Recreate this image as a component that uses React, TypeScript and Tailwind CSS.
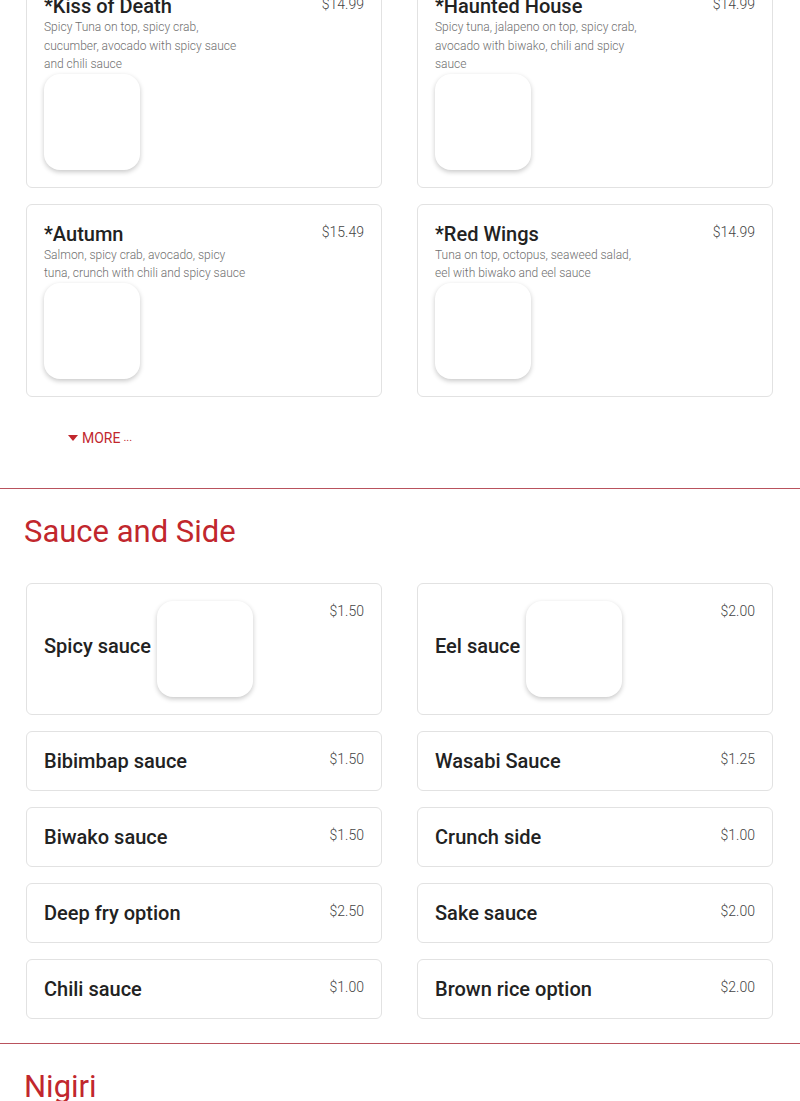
import React from 'react';

type Roll = { name: string; desc: string; price: string };
type Side = { name: string; price: string; image?: boolean };

const rolls: Roll[] = [
  { name: '*Kiss of Death', desc: 'Spicy Tuna on top, spicy crab, cucumber, avocado with spicy sauce and chili sauce', price: '$14.99' },
  { name: '*Haunted House', desc: 'Spicy tuna, jalapeno on top, spicy crab, avocado with biwako, chili and spicy sauce', price: '$14.99' },
  { name: '*Autumn', desc: 'Salmon, spicy crab, avocado, spicy tuna, crunch with chili and spicy sauce', price: '$15.49' },
  { name: '*Red Wings', desc: 'Tuna on top, octopus, seaweed salad, eel with biwako and eel sauce', price: '$14.99' },
];

const sides: Side[] = [
  { name: 'Spicy sauce', price: '$1.50', image: true },
  { name: 'Eel sauce', price: '$2.00', image: true },
  { name: 'Bibimbap sauce', price: '$1.50' },
  { name: 'Wasabi Sauce', price: '$1.25' },
  { name: 'Biwako sauce', price: '$1.50' },
  { name: 'Crunch side', price: '$1.00' },
  { name: 'Deep fry option', price: '$2.50' },
  { name: 'Sake sauce', price: '$2.00' },
  { name: 'Chili sauce', price: '$1.00' },
  { name: 'Brown rice option', price: '$2.00' },
];

const Thumb = () => (
  <div className="w-24 h-24 shrink-0 rounded-2xl bg-white shadow-[0_2px_5px_rgba(0,0,0,0.22)]" />
);

const RollCard: React.FC<{ roll: Roll }> = ({ roll }) => (
  <div className="border border-[#e2e2e2] rounded-md bg-white px-[17px] py-[17px] flex justify-between">
    <div>
      <h3 className="text-[20px] leading-6 font-medium text-[#222]">{roll.name}</h3>
      <p className="w-[208px] text-[12px] leading-[18.5px] font-light text-[#6f6f6f]">{roll.desc}</p>
      <Thumb />
    </div>
    <span className="text-[14px] leading-5 font-light text-[#444]">{roll.price}</span>
  </div>
);

const SideCard: React.FC<{ side: Side }> = ({ side }) => (
  <div className="border border-[#e2e2e2] rounded-md bg-white px-[17px] py-[17px] flex justify-between">
    <div className="flex items-center gap-[6px]">
      <h3 className={`text-[20px] leading-6 font-medium text-[#222] ${side.image ? 'pb-[6px]' : ''}`}>{side.name}</h3>
      {side.image && <Thumb />}
    </div>
    <span className="text-[14px] leading-5 font-light text-[#444]">{side.price}</span>
  </div>
);

export default function App() {
  return (
    <div className="bg-white min-h-screen overflow-hidden" style={{ fontFamily: 'Roboto, "Liberation Sans", sans-serif' }}>
      <section className="-mt-[24px] pb-10">
        <div className="grid grid-cols-2 gap-x-[35px] gap-y-4 pl-[26px] pr-[27px]">
          {rolls.map((r) => (
            <RollCard key={r.name} roll={r} />
          ))}
        </div>
        <button className="mt-[31px] ml-[68px] flex items-center gap-1 text-[14px] leading-5 text-[#c1272d]">
          <svg width="10" height="6" viewBox="0 0 10 6">
            <path d="M0 0h10L5 6z" fill="#c1272d" />
          </svg>
          MORE <span className="text-[11px] ml-[-1px]">...</span>
        </button>
      </section>

      <section className="border-t border-[#b9525d] pt-6 pb-6">
        <h2 className="ml-6 text-[31px] leading-[38px] text-[#c1272d]">Sauce and Side</h2>
        <div className="mt-8 grid grid-cols-2 gap-x-[35px] gap-y-4 pl-[26px] pr-[27px]">
          {sides.map((s) => (
            <SideCard key={s.name} side={s} />
          ))}
        </div>
      </section>

      <section className="border-t border-[#b9525d] pt-6 pb-6">
        <h2 className="ml-6 text-[31px] leading-[38px] text-[#c1272d]">Nigiri</h2>
      </section>
    </div>
  );
}
